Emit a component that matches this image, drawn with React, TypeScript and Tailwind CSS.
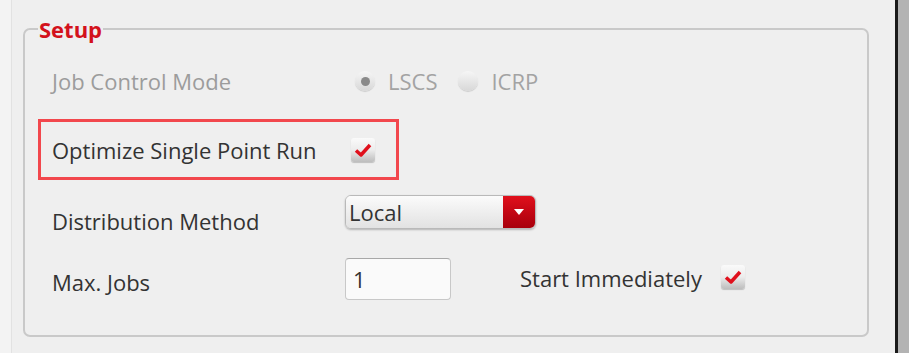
import React from 'react';

function Radio({ checked, label }: { checked: boolean; label: string }) {
  return (
    <div className="flex items-center gap-[13px]">
      <span className="relative flex h-[20px] w-[20px] items-center justify-center rounded-full bg-gradient-to-b from-[#f6f6f6] to-[#d8d8d8] shadow-[0_1px_1px_rgba(0,0,0,0.15)]">
        {checked && <span className="h-[9px] w-[9px] rounded-full bg-[#8a8a8a]" />}
      </span>
      <span className="text-[#a3a3a3]">{label}</span>
    </div>
  );
}

function CheckBox() {
  return (
    <span className="flex h-[24px] w-[24px] items-center justify-center rounded-[3px] bg-gradient-to-b from-[#fafafa] via-[#ececec] to-[#bdbdbd] shadow-[0_1px_1px_rgba(0,0,0,0.2)]">
      <svg width="18" height="16" viewBox="0 0 18 16">
        <path d="M2 8.5 L7 13 L16 3" fill="none" stroke="#e0101c" strokeWidth="3.5" strokeLinejoin="round" />
      </svg>
    </span>
  );
}

export default function App() {
  return (
    <div
      className="flex h-[353px] w-[909px] bg-[#efefef] text-[22px] leading-[28px] text-[#333]"
      style={{ fontFamily: '"Open Sans", "Noto Sans", sans-serif' }}
    >
      <div className="w-[12px] border-r border-[#e2e2e2] bg-[#f3f3f3]" />
      <div className="w-[883px] pl-[11px] pt-[17px]">
        <fieldset className="h-[320px] w-[846px] rounded-[7px] border-2 border-[#c9c9c9] pl-[13px]">
          <legend className="px-[1px] text-[22px] font-bold leading-[24px] text-[#d3121c]">Setup</legend>

          <div className="mt-[21px] flex h-[38px] items-center px-[14px]">
            <span className="w-[303px] text-[#9c9c9c]">Job Control Mode</span>
            <div className="flex items-center gap-[21px]">
              <Radio checked label="LSCS" />
              <Radio checked={false} label="ICRP" />
            </div>
          </div>

          <div className="mt-[19px] flex h-[61px] w-[361px] items-center border-[3px] border-[#f2474d] px-[11px]">
            <span className="w-[299px]">Optimize Single Point Run</span>
            <CheckBox />
          </div>

          <div className="mt-[15px] flex h-[40px] items-start px-[14px]">
            <span className="mt-[12px] w-[293px]">Distribution Method</span>
            <div className="flex h-[34px] w-[191px] overflow-hidden rounded-[6px] border border-[#b9b9b9] shadow-[0_1px_2px_rgba(0,0,0,0.25)]">
              <span className="flex flex-1 items-center bg-gradient-to-b from-[#fbfbfb] to-[#e2e2e2] pl-[3px] leading-none">Local</span>
              <span className="flex w-[32px] items-center justify-center bg-gradient-to-b from-[#e0101c] to-[#a8000c]">
                <svg width="12" height="8" viewBox="0 0 12 8">
                  <path d="M1 1 L11 1 L6 7 Z" fill="#fff" />
                </svg>
              </span>
            </div>
          </div>

          <div className="mt-[22px] flex h-[44px] items-center px-[14px]">
            <span className="mt-[6px] w-[293px]">Max. Jobs</span>
            <div className="flex h-[42px] w-[106px] items-center rounded-[4px] border border-[#c8c8c8] border-t-[#a8a8a8] bg-[#fafafa] pl-[7px]">
              1
            </div>
            <span className="ml-[69px] mt-[-2px] w-[201px]">Start Immediately</span>
            <span className="mt-[-4px]">
              <CheckBox />
            </span>
          </div>
        </fieldset>
      </div>
      <div className="w-[3px] bg-[#1a1a1a]" />
      <div className="flex-1 bg-[#b3b3b3]" />
    </div>
  );
}
